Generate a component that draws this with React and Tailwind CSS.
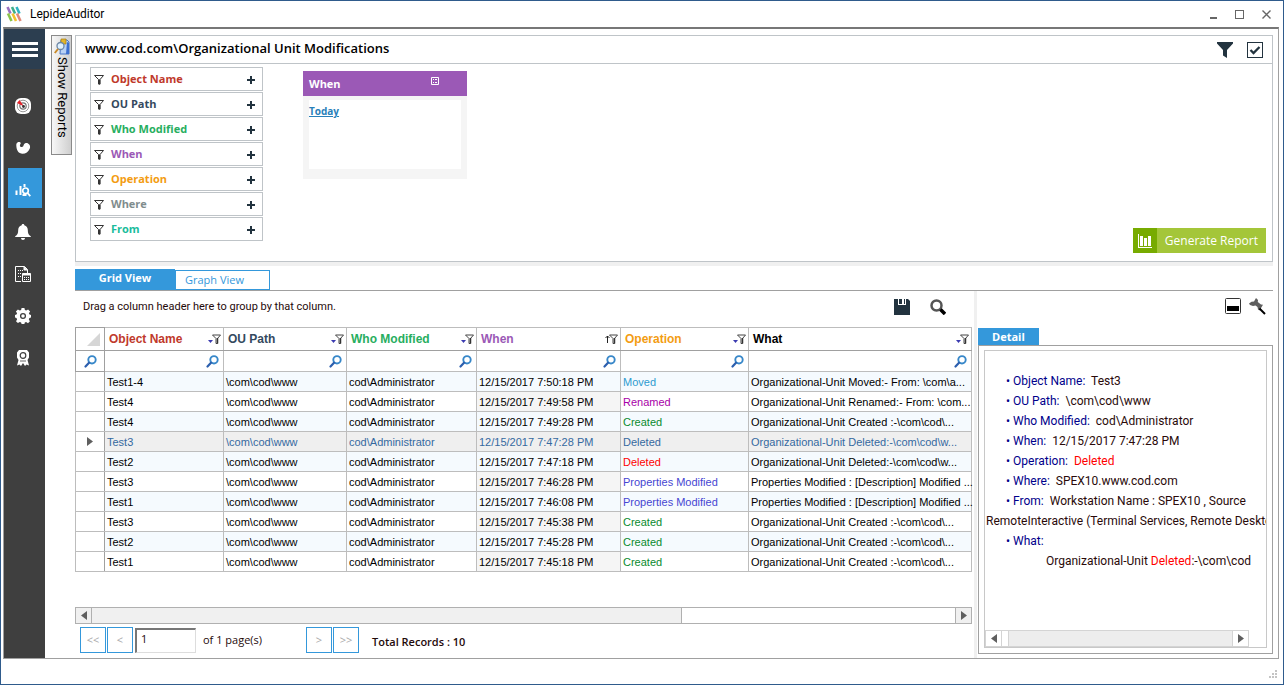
const sidebarItems = [
    { name: "Dashboard", icon: <RadarIcon /> },
    { name: "Health", icon: <HealthIcon /> },
    { name: "Reports", icon: <ReportIcon />, active: true },
    { name: "Alerts", icon: <BellIcon /> },
    { name: "Schedules", icon: <ScheduleIcon /> },
    { name: "Settings", icon: <GearIcon /> },
    { name: "Licence", icon: <AwardIcon /> },
];

const filters = [
    { label: "Object Name", color: "text-[#c0392b]" },
    { label: "OU Path", color: "text-[#34495e]" },
    { label: "Who Modified", color: "text-[#27ae60]" },
    { label: "When", color: "text-[#9b59b6]" },
    { label: "Operation", color: "text-[#f39c12]" },
    { label: "Where", color: "text-[#7f8c8d]" },
    { label: "From", color: "text-[#1abc9c]" },
];

const columns = [
    { label: "Object Name", color: "text-[#c0392b]", width: "w-[119px]" },
    { label: "OU Path", color: "text-[#34495e]", width: "w-[123px]" },
    { label: "Who Modified", color: "text-[#27ae60]", width: "w-[130px]" },
    { label: "When", color: "text-[#9b59b6]", width: "w-[144px]", sorted: true },
    { label: "Operation", color: "text-[#f39c12]", width: "w-[128px]" },
    { label: "What", color: "text-black", width: "" },
];

const operationColors = {
    Moved: "text-[#2e9bd0]",
    Renamed: "text-[#a800a8]",
    Created: "text-[#0a8a2e]",
    Deleted: "text-[#ff0000]",
    "Properties Modified": "text-[#4646d2]",
};

const rows = [
    { name: "Test1-4", when: "7:50:18", op: "Moved", what: "Organizational-Unit Moved:-  From: \\com\\a..." },
    { name: "Test4", when: "7:49:58", op: "Renamed", what: "Organizational-Unit Renamed:-  From: \\com..." },
    { name: "Test4", when: "7:49:28", op: "Created", what: "Organizational-Unit Created :-\\com\\cod\\..." },
    { name: "Test3", when: "7:47:28", op: "Deleted", what: "Organizational-Unit Deleted:-\\com\\cod\\w...", selected: true },
    { name: "Test2", when: "7:47:18", op: "Deleted", what: "Organizational-Unit Deleted:-\\com\\cod\\w..." },
    { name: "Test3", when: "7:46:28", op: "Properties Modified", what: "Properties Modified :  [Description] Modified ..." },
    { name: "Test1", when: "7:46:08", op: "Properties Modified", what: "Properties Modified :  [Description] Modified ..." },
    { name: "Test3", when: "7:45:38", op: "Created", what: "Organizational-Unit Created :-\\com\\cod\\..." },
    { name: "Test2", when: "7:45:28", op: "Created", what: "Organizational-Unit Created :-\\com\\cod\\..." },
    { name: "Test1", when: "7:45:18", op: "Created", what: "Organizational-Unit Created :-\\com\\cod\\..." },
];

const details = [
    { label: "Object Name:", value: "Test3" },
    { label: "OU Path:", value: "\\com\\cod\\www" },
    { label: "Who Modified:", value: "cod\\Administrator" },
    { label: "When:", value: "12/15/2017 7:47:28 PM" },
    { label: "Operation:", value: "Deleted", color: "text-[#ff0000]" },
    { label: "Where:", value: "SPEX10.www.cod.com" },
    { label: "From:", value: "Workstation Name : SPEX10 , Source" },
];

/* ---------- icons ---------- */

function LogoIcon() {
    return (
        <svg width="16" height="16" viewBox="0 0 16 16" fill="none" strokeWidth="2.6">
            <path d="M1.500 1l3 6.500" stroke="#9b6fc0" />
            <path d="M6 1l3 6.500" stroke="#3fae8a" />
            <path d="M10.500 1l3 6.500" stroke="#2fb3c4" />
            <path d="M2 7.500l3.500 7.500" stroke="#8bc34a" />
            <path d="M6.500 7.500l3.500 7.500" stroke="#f2c230" />
            <path d="M11 7.500l3.500 7.500" stroke="#e08a7a" />
        </svg>
    );
}

function RadarIcon() {
    return (
        <svg width="16" height="16" viewBox="0 0 16 16" fill="none">
            <rect width="16" height="16" rx="6" fill="#fff" />
            <circle cx="8" cy="8" r="5.800" stroke="#999" strokeWidth="1" />
            <circle cx="8" cy="8" r="3.200" stroke="#777" strokeWidth="1.200" />
            <path d="M9 8.500L2 5l2.500-3z" fill="#e8232a" />
            <circle cx="8.500" cy="8.500" r="1.400" fill="#333" />
        </svg>
    );
}

function HealthIcon() {
    return (
        <svg width="16" height="16" viewBox="0 0 16 16" fill="#fff">
            <path d="M2.500 2.500C3.500 1.800 5.500 2 5.700 3.200c.1.900-.8 1.300-.8 2.200 0 1 .9 1.600 1.900 1.600 1.200 0 1.500-1 1.900-2 .7-1.700 2.600-2.300 4.300-1.600 2.100.9 2.600 3.200 1.700 5.300-1.200 3-4 5-7.200 5C3.700 13.700 1.500 10.500 1.300 5.500c0-1.200.2-2.300 1.200-3z" />
        </svg>
    );
}

function ReportIcon() {
    return (
        <svg width="16" height="16" viewBox="0 0 16 16" fill="none" stroke="#fff" strokeWidth="2">
            <path d="M1.500 8.500V13M5.500 4v9M9.500 2v3" />
            <circle cx="10.500" cy="8.800" r="2.800" strokeWidth="1.700" />
            <path d="M12.500 11l2.800 3.200M7.500 13h4" strokeWidth="1.800" />
        </svg>
    );
}

function BellIcon() {
    return (
        <svg width="16" height="16" viewBox="0 0 16 16" fill="#fff">
            <path d="M8 0c.8 0 1.300.5 1.300 1.300C11.600 2 12.800 3.800 12.800 6c0 3.500.8 4.800 3 6.300V13H.2v-.7c2.200-1.500 3-2.800 3-6.300 0-2.200 1.200-4 3.500-4.700C6.700.5 7.200 0 8 0zM6 14h4c0 1.200-.9 2-2 2s-2-.8-2-2z" />
        </svg>
    );
}

function ScheduleIcon() {
    return (
        <svg width="16" height="16" viewBox="0 0 16 16" fill="none" stroke="#fff">
            <path d="M6 15.500H.5V.5h9l3 3V7" />
            <path d="M9 .5V4h3.500" fill="#fff" />
            <path d="M3 4.500h5M3 7.500h4M3 10.500h3" strokeDasharray="1 1" />
            <path d="M7.500 7.500h8v8h-8z" />
            <path d="M7.500 8.500h8" strokeWidth="2" />
            <path d="M9 11.500h5M9 13.500h5" strokeDasharray="1 1" />
        </svg>
    );
}

function GearIcon() {
    return (
        <svg width="16" height="16" viewBox="0 0 16 16">
            <path
                fill="#fff"
                d="M6.600 0h2.800l.5 2 1.300.6 1.900-1.200 2 2-1.200 1.900.6 1.300 1.500.4v2.500l-1.600.6-.6 1.400 1.100 1.800-1.900 1.900-1.900-1.100-1.300.5-.4 1.400H6.600l-.5-1.500-1.300-.5-1.900 1.100L1 13.200l1.100-1.800-.6-1.400L0 9.500V7l1.500-.4.6-1.300L.9 3.400l2-2 1.900 1.200L6.100 2z"
            />
            <circle cx="8" cy="8" r="2.400" fill="#fff" stroke="#3f3f3f" strokeWidth="1.300" />
        </svg>
    );
}

function AwardIcon() {
    return (
        <svg width="14" height="16" viewBox="0 0 14 16">
            <path fill="#fff" d="M3 0h8l2 2.500v5L11.500 10l1.500 5.500-2.500-1-1.500 1.500-2-3-2 3-1.500-1.500-2.500 1L2.500 10 1 7.500v-5z" />
            <circle cx="7" cy="5.500" r="2.800" fill="#fff" stroke="#3f3f3f" strokeWidth="1.200" />
            <path d="M4 11h6" stroke="#3f3f3f" strokeWidth=".8" />
        </svg>
    );
}

function FunnelOutline() {
    return (
        <svg width="10" height="10" viewBox="0 0 10 10" fill="none" stroke="#333">
            <path d="M.5.5h9L6 4.500v4.500H4.500V4.500z" />
            <path d="M5.500 4.500v5" strokeWidth="1.500" />
        </svg>
    );
}

function FunnelSolid() {
    return (
        <svg width="16" height="16" viewBox="0 0 16 16" fill="#22333f">
            <path d="M0 0h16v1.500L10 8v8l-4-2.500V8L0 1.500z" />
        </svg>
    );
}

function HeaderFilterIcon({ sorted }) {
    return (
        <svg width="13" height="11" viewBox="0 0 13 11" fill="none">
            {sorted ? (
                <path d="M2.500 9V2M.5 4l2-2 2 2" stroke="#222" />
            ) : (
                <path d="M0 6h5L2.500 9z" fill="#3b3bb0" />
            )}
            <path d="M4.500 1h8L9.500 4.500v5h-1.500v-5z" stroke="#444" />
            <path d="M9.500 4v5.500" stroke="#333" strokeWidth="1.500" />
        </svg>
    );
}

function LensIcon() {
    return (
        <svg width="13" height="13" viewBox="0 0 13 13" fill="none" strokeLinecap="round">
            <circle cx="8" cy="4.800" r="3.700" stroke="#3787c9" strokeWidth="1.900" />
            <path d="M5 7.800L1.500 11.500" stroke="#2c5fae" strokeWidth="2.200" />
        </svg>
    );
}

function ReportsBookIcon() {
    return (
        <svg width="16" height="17" viewBox="0 0 16 17">
            <path d="M7 2h6l2 2v12H6z" fill="#b9d2f5" stroke="#4a78c8" />
            <path d="M13 4l2 1v11h-3z" fill="#3c6fd0" />
            <path d="M7 1h5v5H7z" fill="#e3b62b" stroke="#a77d10" strokeWidth=".7" />
            <circle cx="6.500" cy="8" r="3.500" fill="#dff1ff" stroke="#6d87a5" strokeWidth="1.300" />
            <path d="M4 11L.8 15" stroke="#c98a28" strokeWidth="2" />
        </svg>
    );
}

function Arrow({ left }) {
    return (
        <svg width="6" height="9" viewBox="0 0 6 9" fill="#5f5f5f">
            <path d={left ? "M6 0v9L0 4.500z" : "M0 0v9l6-4.500z"} />
        </svg>
    );
}

/* ---------- pieces ---------- */

function TitleBar() {
    return (
        <header className="flex h-[26px] shrink-0 items-center pr-3 pl-[5px]">
            <LogoIcon />
            <span className="ml-2 flex-1 font-['Roboto',sans-serif] text-[12px] text-black">LepideAuditor</span>
            <div className="flex items-center gap-[18px]">
                <button aria-label="Minimize" className="flex h-[10px] w-[7px] items-end">
                    <span className="h-[2px] w-full bg-[#666]" />
                </button>
                <button aria-label="Maximize" className="h-[9px] w-[9px] border border-[#666]" />
                <button aria-label="Close">
                    <svg width="9" height="9" viewBox="0 0 9 9" stroke="#666" strokeWidth="1.400">
                        <path d="M.5.5l8 8M8.500.5l-8 8" />
                    </svg>
                </button>
            </div>
        </header>
    );
}

function Sidebar() {
    return (
        <nav className="flex w-[41px] shrink-0 flex-col items-center bg-[#3f3f3f]">
            <button aria-label="Menu" className="flex h-10 w-full flex-col items-center justify-center gap-[3px] bg-[#2c3e50]">
                <span className="h-[3px] w-[26px] bg-white" />
                <span className="h-[3px] w-[26px] bg-white" />
                <span className="h-[3px] w-[26px] bg-white" />
            </button>
            <div className="mt-[15px] flex flex-col gap-[2px]">
                {sidebarItems.map((item) => (
                    <button
                        key={item.name}
                        aria-label={item.name}
                        className={`flex h-10 w-[34px] items-center justify-center pt-1 pr-1 ${item.active ? "bg-[#3498db]" : ""}`}
                    >
                        {item.icon}
                    </button>
                ))}
            </div>
        </nav>
    );
}

function FilterPanel() {
    return (
        <section className="border border-[#bfc4c8]">
            <div className="flex h-7 items-center border-b border-[#bfc4c8] px-[9px]">
                <h1 className="flex-1 pb-px text-[13px] font-semibold text-black">www.cod.com\Organizational Unit Modifications</h1>
                <button aria-label="Filter" className="mr-[14px]">
                    <FunnelSolid />
                </button>
                <label className="grid">
                    <input
                        type="checkbox"
                        defaultChecked
                        aria-label="Show filters"
                        className="col-start-1 row-start-1 h-4 w-4 appearance-none border border-[#22333f] bg-white"
                    />
                    <svg className="pointer-events-none col-start-1 row-start-1" width="16" height="16" viewBox="0 0 16 16" fill="none">
                        <path d="M3.500 8l3 3 6-6" stroke="#22333f" strokeWidth="2.300" />
                    </svg>
                </label>
            </div>
            <div className="flex items-stretch pt-[3px] pr-[6px] pb-2 pl-[14px]">
                <ul className="mb-3 flex w-[173px] flex-col gap-px">
                    {filters.map((filter) => (
                        <li key={filter.label} className="flex h-6 items-center border border-[#bfc4c8] pt-px pr-[7px] pl-[3px]">
                            <FunnelOutline />
                            <span className={`ml-[7px] flex-1 text-[11px] font-bold ${filter.color}`}>{filter.label}</span>
                            <button aria-label={`Add ${filter.label} filter`}>
                                <svg width="8" height="8" viewBox="0 0 8 8" stroke="#22333f" strokeWidth="2">
                                    <path d="M4 0v8M0 4h8" />
                                </svg>
                            </button>
                        </li>
                    ))}
                </ul>
                <div className="mt-1 ml-10 w-[164px] self-start bg-[#f5f5f5]">
                    <div className="flex h-[25px] items-center bg-[#9b59b6] pt-px pr-7 pl-[6px]">
                        <span className="flex-1 text-[11px] font-bold text-white">When</span>
                        <button aria-label="Edit values" className="mb-[6px]">
                            <svg width="8" height="8" viewBox="0 0 8 8" fill="none" stroke="#fff">
                                <path d="M.5.5h7v7h-7z" />
                                <path d="M2 2.500h1M4 2.500h2M2 5.500h1M4 5.500h2" />
                            </svg>
                        </button>
                    </div>
                    <div className="mx-[6px] mt-1 mb-[10px] h-[69px] bg-white pt-[3px]">
                        <a href="#today" className="block text-[10px] leading-4 font-bold text-[#2980b9] underline">
                            Today
                        </a>
                    </div>
                </div>
                <div className="flex flex-1 items-end justify-end">
                    <button className="flex h-[25px] items-center bg-[#a4c639] text-[12px] text-white">
                        <span className="flex h-full w-6 items-center justify-center bg-[#77ab00]">
                            <svg width="14" height="14" viewBox="0 0 14 14" fill="#fff">
                                <path d="M0 0h1v13h13v1H0zM2 2h3v10H2zM6 4h3v8H6zM10 2h3v10h-3z" />
                            </svg>
                        </span>
                        <span className="px-2">Generate Report</span>
                    </button>
                </div>
            </div>
        </section>
    );
}

function ScrollBar({ thumb, tone }) {
    const dark = tone === "dark";
    const border = dark ? "border-[#b0b0b0]" : "border-[#d4d4d4]";
    return (
        <div className={`flex h-[17px] border ${border} ${dark ? "bg-white" : "bg-[#ededed]"}`}>
            <button aria-label="Scroll left" className={`flex w-4 items-center justify-center border-r ${border} ${dark ? "bg-[#f0f0f0]" : "bg-white"}`}>
                <Arrow left />
            </button>
            <div className="flex-1">
                <div className={`h-full border-r ${border} ${dark ? "bg-[#f0f0f0]" : "bg-white"}`} style={{ width: thumb }} />
            </div>
            <button aria-label="Scroll right" className={`flex w-4 items-center justify-center border-l ${border} ${dark ? "bg-[#f0f0f0]" : "bg-white"}`}>
                <Arrow />
            </button>
        </div>
    );
}

function AuditTable() {
    const cell = "border border-[#bdbdbd] px-[2px] whitespace-nowrap";
    return (
        <table className="w-full table-fixed border-collapse font-['Liberation_Sans',sans-serif] text-[11px] leading-4">
            <thead>
                <tr className="h-[23px]">
                    <th className="w-[29px] border border-[#a0a0a0] pr-1">
                        <svg className="ml-auto" width="13" height="13" viewBox="0 0 13 13" fill="#d6d6d6">
                            <path d="M13 0v13H0z" />
                        </svg>
                    </th>
                    {columns.map((col) => (
                        <th key={col.label} className={`border border-[#bdbdbd] border-b-[#a0a0a0] pr-[2px] pl-1 ${col.width}`}>
                            <div className="flex items-center justify-between">
                                <span className={`text-[12px] font-bold ${col.color}`}>{col.label}</span>
                                <HeaderFilterIcon sorted={col.sorted} />
                            </div>
                        </th>
                    ))}
                </tr>
                <tr className="h-[21px]">
                    <td className="border border-[#a0a0a0]">
                        <div className="flex justify-center">
                            <LensIcon />
                        </div>
                    </td>
                    {columns.map((col) => (
                        <td key={col.label} className="border border-[#bdbdbd] pr-1">
                            <div className="flex items-center">
                                <input aria-label={`Search ${col.label}`} className="h-4 min-w-0 flex-1 px-1 outline-none" />
                                <LensIcon />
                            </div>
                        </td>
                    ))}
                </tr>
            </thead>
            <tbody>
                {rows.map((row, i) => {
                    const stripe = row.selected ? "bg-[#efefef]" : i % 2 === 0 ? "bg-[#f5fafe]" : "bg-white";
                    const text = row.selected ? "text-[#35699f]" : "text-black";
                    const whenBg = !row.selected && i % 2 === 1 ? "bg-[#f5f5f5]" : "";
                    return (
                        <tr key={row.when} className={`h-5 ${stripe} ${text}`}>
                            <td className="border border-[#bdbdbd] border-r-[#a0a0a0] bg-white">
                                {row.selected && (
                                    <div className="flex justify-center">
                                        <Arrow />
                                    </div>
                                )}
                            </td>
                            <td className={cell}>{row.name}</td>
                            <td className={cell}>{"\\com\\cod\\www"}</td>
                            <td className={cell}>{"cod\\Administrator"}</td>
                            <td className={`${cell} ${whenBg}`}>12/15/2017 {row.when} PM</td>
                            <td className={`${cell} ${row.selected ? "" : operationColors[row.op]}`}>{row.op}</td>
                            <td className={cell}>{row.what}</td>
                        </tr>
                    );
                })}
            </tbody>
        </table>
    );
}

function Pager() {
    const button = "h-[26px] w-[26px] border border-[#3498db] bg-white text-[11px] text-[#a8a8a8]";
    return (
        <div className="flex items-center gap-px px-[5px] pt-[3px] pb-[5px] text-[11px] text-[#1f0a0a]">
            <button aria-label="First page" className={button}>&lt;&lt;</button>
            <button aria-label="Previous page" className={button}>&lt;</button>
            <input
                aria-label="Page number"
                defaultValue="1"
                className="ml-px h-[25px] w-[61px] border-t-2 border-r border-b border-l-2 border-t-[#777] border-r-[#ddd] border-b-[#ddd] border-l-[#777] pb-1 pl-1"
            />
            <span className="w-[108px] pl-[6px]">of 1 page(s)</span>
            <button aria-label="Next page" className={button}>&gt;</button>
            <button aria-label="Last page" className={button}>&gt;&gt;</button>
            <span className="pt-1 pl-3 font-semibold">Total Records : 10</span>
        </div>
    );
}

function GridView() {
    return (
        <section className="flex min-w-0 flex-1 flex-col">
            <div className="flex h-9 items-center pr-[26px] pb-1 pl-2">
                <p className="flex-1 font-['Roboto',sans-serif] text-[11px] text-[#1f0a0a]">
                    Drag a column header here to group by that column.
                </p>
                <button aria-label="Save" className="mr-5">
                    <svg width="16" height="16" viewBox="0 0 16 16" fill="#22333f">
                        <path d="M0 0h4v6h8V0h2l2 2v14H0zM5 0h3v5H5zM10 0h1v5h-1z" />
                    </svg>
                </button>
                <button aria-label="Find">
                    <svg width="16" height="16" viewBox="0 0 16 16" fill="none">
                        <circle cx="6.500" cy="6.500" r="5" stroke="#555" strokeWidth="2.500" />
                        <path d="M10.500 10.500l4.500 4.500" stroke="#000" strokeWidth="3.500" />
                    </svg>
                </button>
            </div>
            <AuditTable />
            <div className="flex-1" />
            <ScrollBar thumb="68.4%" tone="dark" />
            <Pager />
        </section>
    );
}

function DetailPane() {
    return (
        <aside className="flex w-[295px] shrink-0 flex-col text-[12px]">
            <div className="flex h-9 items-center justify-end gap-2 pr-[7px] pb-[6px]">
                <button aria-label="Minimize detail">
                    <svg width="16" height="16" viewBox="0 0 16 16">
                        <rect x=".5" y=".5" width="15" height="15" rx="1" fill="#fff" stroke="#333" />
                        <path d="M2 8h12v5H2z" />
                    </svg>
                </button>
                <button aria-label="Pin detail">
                    <svg width="17" height="17" viewBox="0 0 17 17">
                        <path d="M7 0l2 2-.2 2L12 6.500l2 .3-3.500 5.700-1.500-1-.5-2.500L6.500 7.500 4 8 1 7 0 5.500l2.500-1.800L5 3.500z" fill="#5f5f5f" />
                        <path d="M10.500 10.500l5.500 5.500" stroke="#000" strokeWidth="2" />
                    </svg>
                </button>
            </div>
            <div className="flex">
                <button className="mt-px h-[17px] bg-[#3498db] px-[14px] text-[11px] leading-4 font-bold text-white">Detail</button>
            </div>
            <div className="mb-1 flex flex-1 flex-col border border-[#a0a0a0] px-[5px] pt-1 pb-[5px]">
                <div className="flex flex-1 flex-col border border-[#c8c8c8]">
                    <ul className="flex-1 overflow-hidden pt-5 font-['Roboto',sans-serif] leading-5 whitespace-pre text-[#2a0a0a]">
                        {details.map((item) => (
                            <li key={item.label} className="pl-[21px]">
                                <span className="text-[#00008b]">• {item.label}</span>
                                {"  "}
                                <span className={item.color}>{item.value}</span>
                            </li>
                        ))}
                        <li className="pl-px">RemoteInteractive (Terminal Services, Remote Deskto</li>
                        <li className="pl-[21px] text-[#00008b]">• What:</li>
                        <li className="pl-[61px]">
                            Organizational-Unit <span className="text-[#ff0000]">Deleted</span>:-\com\cod
                        </li>
                    </ul>
                    <div className="mr-[17px]">
                        <ScrollBar thumb="3%" />
                    </div>
                </div>
            </div>
        </aside>
    );
}

export default function App() {
    return (
        <div className="flex min-h-screen flex-col border border-[#2f5b8c] bg-white font-['Open_Sans',sans-serif]">
            <TitleBar />
            <div className="mr-1 ml-[2px] flex flex-1 border border-t-2 border-[#a0a0a0] border-t-[#777]">
                <Sidebar />
                <main className="flex min-w-0 flex-1 pt-[6px] pr-[5px] pl-[6px]">
                    <div className="mr-[3px] shrink-0">
                        <button className="flex w-[21px] flex-col items-center border border-[#8a8a8a] bg-gradient-to-r from-[#f7f7f7] to-[#cfcfcf] pt-[2px] pb-4 text-black">
                            <ReportsBookIcon />
                            <span className="mt-[2px] font-['Roboto',sans-serif] text-[13px] leading-4 [writing-mode:vertical-rl]">
                                Show Reports
                            </span>
                        </button>
                    </div>
                    <div className="flex min-w-0 flex-1 flex-col">
                        <FilterPanel />
                        <div className="h-1 shrink-0 bg-[#f0f0f0]" />
                        <div role="tablist" className="mt-[3px] flex items-end border-b border-[#a0a0a0]">
                            <button role="tab" aria-selected="true" className="h-[21px] w-[100px] bg-[#3498db] pb-[2px] text-[11px] font-bold text-white">
                                Grid View
                            </button>
                            <button role="tab" aria-selected="false" className="h-5 w-[95px] border border-[#3498db] pr-4 text-[11px] text-[#3498db]">
                                Graph View
                            </button>
                        </div>
                        <div className="flex flex-1">
                            <GridView />
                            <div className="mr-px ml-[2px] w-[3px] shrink-0 bg-[#f0f0f0]" />
                            <DetailPane />
                        </div>
                    </div>
                </main>
            </div>
            <footer className="flex h-[25px] shrink-0 items-end justify-end pr-[6px] pb-[6px]">
                <svg width="8" height="8" viewBox="0 0 8 8" fill="#c4c4c4">
                    <path d="M6 0h2v2H6zM6 3h2v2H6zM6 6h2v2H6zM3 3h2v2H3zM3 6h2v2H3zM0 6h2v2H0z" />
                </svg>
            </footer>
        </div>
    );
}
